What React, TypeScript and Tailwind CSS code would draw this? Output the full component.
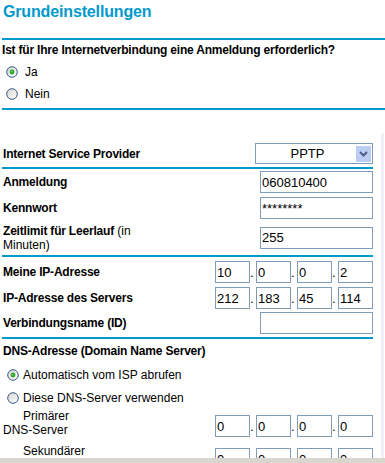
import React from 'react';

const RadioDot = ({ checked }: { checked?: boolean }) => (
  <svg width="12" height="12" viewBox="0 0 12 12" className="shrink-0">
    <defs>
      <linearGradient id="radioFill" x1="0" y1="0" x2="1" y2="1">
        <stop offset="0" stopColor="#d4d4cf" />
        <stop offset="1" stopColor="#ffffff" />
      </linearGradient>
    </defs>
    <circle cx="6" cy="6" r="5.3" fill="url(#radioFill)" stroke="#3b5a86" strokeWidth="1" />
    {checked && (
      <>
        <circle cx="6" cy="6" r="2.4" fill="#2aa32a" />
        <circle cx="5.6" cy="5.6" r="0.9" fill="#7fdc7f" />
      </>
    )}
  </svg>
);

const Field = ({ value, w = 'w-[113px]' }: { value?: string; w?: string }) => (
  <input
    readOnly
    value={value ?? ''}
    className={`${w} h-[22px] border border-[#7f9db9] bg-white px-[1px] text-[13px] leading-[20px] text-black outline-none`}
  />
);

const IpFields = ({ values }: { values: string[] }) => (
  <div className="flex items-center">
    {values.map((v, i) => (
      <React.Fragment key={i}>
        {i > 0 && <span className="w-[6px] text-[13px] leading-[20px] pt-[2px]">.</span>}
        <Field value={v} w="w-[35px]" />
      </React.Fragment>
    ))}
  </div>
);

const Rule = ({ full }: { full?: boolean }) => (
  <div className={`h-[2px] bg-[#0099cc] ${full ? 'ml-[2px]' : ''}`} />
);

export default function App() {
  return (
    <div className="w-[385px] h-[463px] overflow-hidden bg-white flex flex-col font-['Liberation_Sans',Arial,sans-serif] text-black text-[12px] leading-[14px]">
      <div className="h-[458px] overflow-hidden">
        {/* header part */}
        <div className="pt-[2px]">
          <h1 className="h-[20px] pl-[3px] text-[16px] leading-[20px] font-bold tracking-[-0.15px] text-[#0099cc]">Grundeinstellungen</h1>
          <div className="mt-[16px]"><Rule full /></div>
          <div className="mt-[3px] h-[14px] pl-[2px] font-bold tracking-[-0.2px]">Ist für Ihre Internetverbindung eine Anmeldung erforderlich?</div>
          <div className="mt-[4px] h-[22px] flex items-center pl-[6px] gap-[7px]">
            <RadioDot checked />
            <span>Ja</span>
          </div>
          <div className="h-[22px] flex items-center pl-[6px] gap-[7px]">
            <RadioDot />
            <span>Nein</span>
          </div>
          <div className="mt-[3px]"><Rule full /></div>
        </div>

        {/* settings table */}
        <div className="flex">
          <div className="w-[373px] pl-[2px]">
            <div className="mt-[32px] h-[23px] flex items-center justify-between pl-[1px]">
              <span className="font-bold tracking-[-0.2px]">Internet Service Provider</span>
              <div className="w-[118px] h-[21px] border border-[#7f9db9] flex items-center pl-[1px] pr-[1px]">
                <span className="flex-1 text-center text-[13px] pl-[2px]">PPTP</span>
                <div className="w-[15px] h-[16px] bg-[#bccdf4] flex items-center justify-center">
                  <svg width="9" height="6" viewBox="0 0 9 6">
                    <path d="M1 1 L4.5 4.5 L8 1" fill="none" stroke="#4d5f85" strokeWidth="2" />
                  </svg>
                </div>
              </div>
            </div>
            <div className="mt-[2px]"><Rule /></div>

            <div className="h-[26px] flex items-center justify-between pl-[1px]">
              <span className="font-bold tracking-[-0.2px]">Anmeldung</span>
              <Field value="060810400" />
            </div>
            <div className="h-[26px] flex items-center justify-between pl-[1px]">
              <span className="font-bold tracking-[-0.2px]">Kennwort</span>
              <Field value="********" />
            </div>
            <div className="h-[33px] flex items-center justify-between pl-[1px]">
              <span>
                <b className="tracking-[-0.2px]">Zeitlimit für Leerlauf</b> (in
                <br />
                Minuten)
              </span>
              <Field value="255" />
            </div>
            <div className="mt-[1px]"><Rule /></div>

            <div className="mt-[2px] h-[26px] flex items-center justify-between pl-[1px]">
              <span className="font-bold tracking-[-0.2px]">Meine IP-Adresse</span>
              <IpFields values={['10', '0', '0', '2']} />
            </div>
            <div className="h-[26px] flex items-center justify-between pl-[1px]">
              <span className="font-bold tracking-[-0.2px]">IP-Adresse des Servers</span>
              <IpFields values={['212', '183', '45', '114']} />
            </div>
            <div className="h-[24px] flex items-center justify-between pl-[1px]">
              <span className="font-bold tracking-[-0.2px]">Verbindungsname (ID)</span>
              <Field />
            </div>
            <div className="mt-[2px]"><Rule /></div>

            <div className="mt-[5px] h-[14px] pl-[1px] font-bold tracking-[-0.2px]">DNS-Adresse (Domain Name Server)</div>
            <div className="mt-[5px] h-[23px] flex items-center pl-[5px] gap-[4px]">
              <RadioDot checked />
              <span>Automatisch vom ISP abrufen</span>
            </div>
            <div className="h-[23px] flex items-center pl-[5px] gap-[4px]">
              <RadioDot />
              <span>Diese DNS-Server verwenden</span>
            </div>
            <div className="h-[35px] flex items-start justify-between pl-[1px]">
              <span>
                <span className="pl-[20px]">Primärer</span>
                <br />
                DNS-Server
              </span>
              <div className="mt-[6px]"><IpFields values={['0', '0', '0', '0']} /></div>
            </div>
            <div className="h-[35px] flex items-start justify-between pl-[1px]">
              <span>
                <span className="pl-[20px]">Sekundärer</span>
                <br />
                DNS-Server
              </span>
              <div className="mt-[4px]"><IpFields values={['0', '0', '0', '0']} /></div>
            </div>
          </div>
          <div className="ml-auto mr-[1px] mt-[23px] w-[3px] h-[400px] bg-[#f1f0f6]" />
        </div>
      </div>
      <div className="h-[5px] bg-[#d9d6cf]" />
    </div>
  );
}
